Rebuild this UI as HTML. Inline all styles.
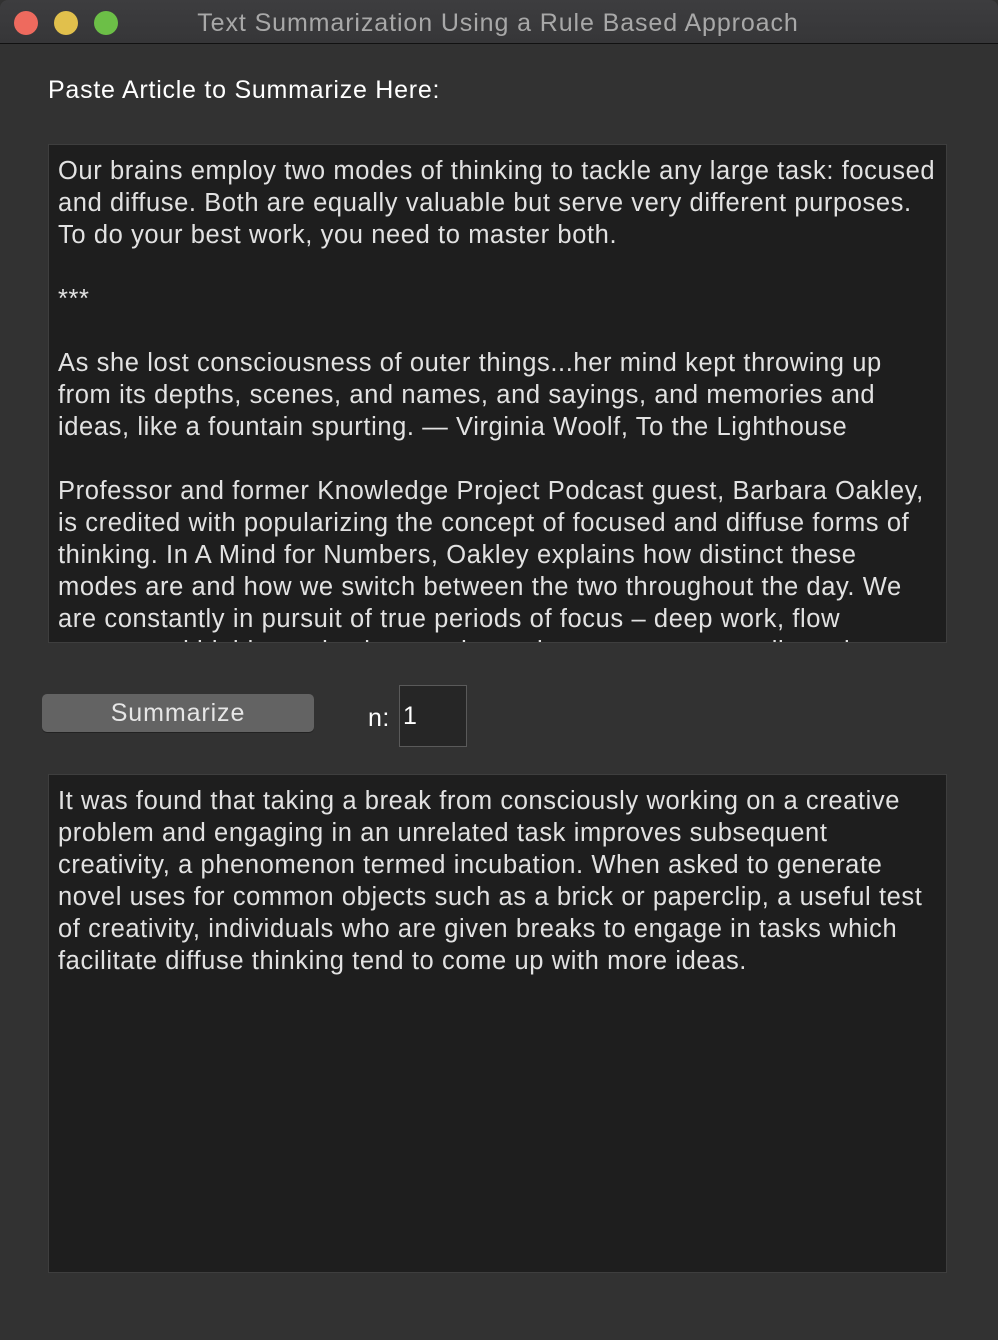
<!DOCTYPE html>
<html><head><meta charset="utf-8"><style>
*{margin:0;padding:0;box-sizing:border-box}
body{width:998px;height:1340px;background:#323232;font-family:"Liberation Sans",sans-serif;position:relative;overflow:hidden}
.tb{position:absolute;left:0;top:0;width:998px;height:44px;background:linear-gradient(#3d3d3f,#363638);border-bottom:1px solid #111;border-radius:8px 8px 0 0}
.dot{position:absolute;top:11px;width:24px;height:24px;border-radius:50%}
.title{position:absolute;top:9px;left:0;width:996px;text-align:center;color:#a8a8a8;font-size:25px;letter-spacing:0.9px}
.lbl{position:absolute;left:48px;top:76px;color:#fff;font-size:25px;letter-spacing:0.75px}
.box{position:absolute;left:48px;width:899px;background:#1e1e1e;border:1px solid #3e3e3e;overflow:hidden;color:#e2e2e2;font-size:25.5px;letter-spacing:0.6px;line-height:32px;padding:10px 0 0 9px;white-space:nowrap}
.btn{position:absolute;left:42px;top:694px;width:272px;height:38px;background:#636363;border-radius:5px;color:#e6e6e6;font-size:25px;letter-spacing:0.9px;text-align:center;line-height:38px;box-shadow:0 1px 0 #222}
.n{position:absolute;left:368px;top:704px;color:#fff;font-size:25px;letter-spacing:0.5px}
.inp{position:absolute;left:399px;top:685px;width:68px;height:62px;background:#262626;border:1px solid #5a5a5a;color:#fff;font-size:25px;padding:16px 0 0 3px}
</style></head><body>
<div class="tb">
<div class="dot" style="left:14px;background:#ee6a5e"></div>
<div class="dot" style="left:54px;background:#e1c04c"></div>
<div class="dot" style="left:94px;background:#6cbf47"></div>
<div class="title">Text Summarization Using a Rule Based Approach</div>
</div>
<div class="lbl">Paste Article to Summarize Here:</div>
<div class="box" style="top:144px;height:499px">
Our brains employ two modes of thinking to tackle any large task: focused<br>
and diffuse. Both are equally valuable but serve very different purposes.<br>
To do your best work, you need to master both.<br><br>
***<br><br>
As she lost consciousness of outer things...her mind kept throwing up<br>
from its depths, scenes, and names, and sayings, and memories and<br>
ideas, like a fountain spurting. — Virginia Woolf, To the Lighthouse<br><br>
Professor and former Knowledge Project Podcast guest, Barbara Oakley,<br>
is credited with popularizing the concept of focused and diffuse forms of<br>
thinking. In A Mind for Numbers, Oakley explains how distinct these<br>
modes are and how we switch between the two throughout the day. We<br>
are constantly in pursuit of true periods of focus – deep work, flow<br>
states, and highly productive sessions where we seem to pull results
</div>
<div class="btn">Summarize</div>
<div class="n">n:</div>
<div class="inp">1</div>
<div class="box" style="top:774px;height:499px">
It was found that taking a break from consciously working on a creative<br>
problem and engaging in an unrelated task improves subsequent<br>
creativity, a phenomenon termed incubation. When asked to generate<br>
novel uses for common objects such as a brick or paperclip, a useful test<br>
of creativity, individuals who are given breaks to engage in tasks which<br>
facilitate diffuse thinking tend to come up with more ideas.
</div>
</body></html>
